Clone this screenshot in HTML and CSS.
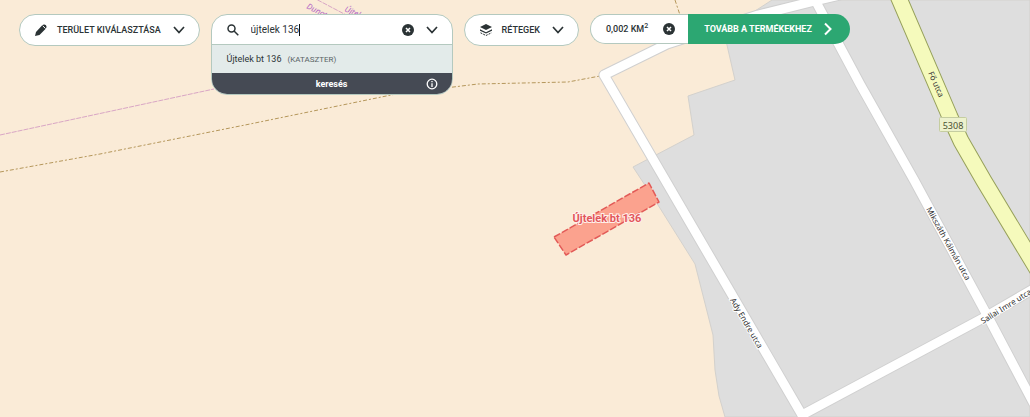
FILE: index.html
```
<!DOCTYPE html>
<html lang="hu">
<head>
<meta charset="utf-8">
<meta name="viewport" content="width=device-width, initial-scale=1">
<title>Térkép</title>
<link rel="stylesheet" href="styles.css">
</head>
<body>
<main class="map-page">
  <svg class="map" viewBox="0 0 1030 417" preserveAspectRatio="xMinYMin slice" role="img" aria-label="Térkép: Újtelek bt 136">
    <path class="built-area" d="M772 0L755 11L724 32L735 80L688 96L694 135L633 167L658 205L695 264L713 335L715 370L719 396L725 417H1030V0Z"/>
    <path class="border-pink" d="M0 135L214 89M312 -3L350 17"/>
    <path class="border-brown" d="M0 172L100 154L250 124L396 94L478 84L568 82L600 76M675 0L680 15"/>
    <g class="road-edge">
      <path d="M1040 285L987 316L802 415L604 75L667 44L758 15L815 1L840 -5"/>
      <path d="M815 0L860 84L914 180L987 315L1034 404"/>
    </g>
    <g class="road">
      <path d="M1040 285L987 316L802 415L604 75L667 44L758 15L815 1L840 -5"/>
      <path d="M815 0L860 84L914 180L987 315L1034 404"/>
    </g>
    <path class="main-road-edge" d="M898 -4L950 117L961 141L984 181L1040 274"/>
    <path class="main-road" d="M898 -4L950 117L961 141L984 181L1040 274"/>
    <path class="parcel" d="M554 237L649 183L659 202L566 255Z"/>
    <g class="street">
      <text transform="translate(730 300) rotate(60)">Ady Endre utca</text>
      <text transform="translate(926 209) rotate(61)">Mikszáth Kálmán utca</text>
      <text transform="translate(983 324) rotate(-32)">Sallai Imre utca</text>
      <text class="on-yellow" transform="translate(928 73) rotate(66)">Fő utca</text>
    </g>
    <g class="place">
      <text transform="translate(306 8) rotate(27)">Dunatetétlen</text>
      <text transform="translate(344 11) rotate(24)">Újtelek</text>
    </g>
    <rect class="road-sign" x="939.500" y="117.500" width="27" height="14" rx="1"/>
    <text class="road-number" x="953" y="129">5308</text>
    <text class="parcel-name" x="607" y="222">Újtelek bt 136</text>
  </svg>

  <header class="toolbar">
    <button class="pill area-button" type="button">
      <svg class="icon" viewBox="0 0 14 14" aria-hidden="true"><path d="M1 13L2 9L8 2.500Q10 .8 12 2.300Q13.400 4 11.700 5.700L5.500 12Z"/><path class="icon-gap" d="M8.700 2.800L11.500 5.500"/></svg>
      <span>TERÜLET KIVÁLASZTÁSA</span>
      <svg class="chevron" viewBox="0 0 12 8" aria-hidden="true"><path d="M1 1L6 6.500L11 1"/></svg>
    </button>

    <form class="search" role="search">
      <div class="search-row">
        <svg class="search-icon" viewBox="0 0 12 12" aria-hidden="true"><circle cx="4.500" cy="4.500" r="3.500"/><path d="M7 7L11.300 11.300"/></svg>
        <label class="field"><input class="search-input" type="text" aria-label="Keresés" value="újtelek 136"><span class="caret"></span></label>
        <button class="icon-button" type="button" aria-label="Törlés"><svg class="clear" viewBox="0 0 12 12" aria-hidden="true"><circle cx="6" cy="6" r="6"/><path d="M4 4L8 8M8 4L4 8"/></svg></button>
        <button class="icon-button" type="button" aria-label="Lenyitás"><svg class="chevron" viewBox="0 0 12 8" aria-hidden="true"><path d="M1 1L6 6.500L11 1"/></svg></button>
      </div>
      <button class="result" type="button"><span>Újtelek bt 136</span><span class="result-kind">(KATASZTER)</span></button>
      <div class="search-footer">
        <button class="submit" type="submit">keresés</button>
        <button class="icon-button info" type="button" aria-label="Információ"><svg class="info-icon" viewBox="0 0 12 12" aria-hidden="true"><circle cx="6" cy="6" r="4.800"/><path d="M6 5.300V9M6 3V4.300"/></svg></button>
      </div>
    </form>

    <button class="pill layers-button" type="button">
      <svg class="icon" viewBox="0 0 14 14" aria-hidden="true"><path d="M7 1L13 4L7 7L1 4ZM1 6.200L7 9.200L13 6.200V7.800L7 10.600L1 7.800Z"/><path class="layer-line" d="M1.500 9.800L7 12.500L12.500 9.800"/></svg>
      <span>RÉTEGEK</span>
      <svg class="chevron" viewBox="0 0 12 8" aria-hidden="true"><path d="M1 1L6 6.500L11 1"/></svg>
    </button>

    <div class="order">
      <div class="size">
        <span>0,002 KM<sup>2</sup></span>
        <button class="icon-button" type="button" aria-label="Terület törlése"><svg class="clear" viewBox="0 0 12 12" aria-hidden="true"><circle cx="6" cy="6" r="6"/><path d="M4 4L8 8M8 4L4 8"/></svg></button>
      </div>
      <button class="next" type="button"><span>TOVÁBB A TERMÉKEKHEZ</span><svg class="arrow" viewBox="0 0 8 14" aria-hidden="true"><path d="M1 1.500L6.500 7L1 12.500"/></svg></button>
    </div>
  </header>
</main>
</body>
</html>
```
FILE: styles.css
```
* { box-sizing: border-box; }

body {
  margin: 0;
  font-family: Roboto, "Liberation Sans", sans-serif;
  font-size: 9px;
  color: #2b3335;
  background: #faebd7;
}

button, input { font: inherit; color: inherit; }

button {
  padding: 0;
  border: 0;
  background: none;
  cursor: pointer;
}

.map-page {
  position: relative;
  min-height: 100vh;
  overflow: hidden;
}

/* Map */
.map {
  position: absolute;
  inset: 0;
  width: 100%;
  height: 100%;
}

.map path { stroke-linejoin: round; }
.built-area { fill: #dedede; stroke: #d3d1cd; }
.border-pink { fill: none; stroke: #d9a6c5; stroke-dasharray: 5 1; }
.border-brown { fill: none; stroke: #b5975b; stroke-dasharray: 4 2 2 2; }
.road-edge { fill: none; stroke: #d0d0d0; stroke-width: 11; }
.road { fill: none; stroke: #fff; stroke-width: 9; }
.main-road-edge { fill: none; stroke: #96a05a; stroke-width: 17; }
.main-road { fill: none; stroke: #f5fabc; stroke-width: 15; }
.parcel { fill: #fba28e; stroke: #e25a57; stroke-width: 1.500; stroke-dasharray: 7 2; }

.street text {
  font: 8px "Noto Sans", sans-serif;
  fill: #333;
  stroke: #fff;
  stroke-width: 2px;
  paint-order: stroke;
}
.street .on-yellow { stroke: #f5fabc; }
.place { font: italic 8px "Noto Sans", sans-serif; fill: #b264c4; }
.road-sign { fill: #edf2cd; stroke: #c5cda0; }
.road-number { font: 9px "Noto Sans", sans-serif; fill: #4b5132; text-anchor: middle; }
.parcel-name {
  font: bold 11px Roboto, sans-serif;
  fill: #e2565b;
  stroke: #fff0ea;
  stroke-width: 2px;
  paint-order: stroke;
  text-anchor: middle;
}

/* Toolbar */
.toolbar {
  position: relative;
  display: flex;
  align-items: flex-start;
  gap: 11px;
  padding: 14px 19px;
}

.pill {
  display: flex;
  align-items: center;
  height: 32px;
  padding: 0 14px;
  border: 1px solid #b4c9bf;
  border-radius: 16px;
  background: #fff;
  font-weight: 500;
  white-space: nowrap;
}
.pill .chevron { margin-left: 12px; }
.area-button .icon { margin-right: 9px; }
.layers-button .icon { margin-right: 9px; }

.icon { width: 14px; height: 14px; fill: #2b3335; }
.icon-gap { stroke: #fff; }
.layer-line { fill: none; stroke: #2b3335; stroke-dasharray: 2 1; }
.chevron { width: 12px; height: 8px; fill: none; stroke: #2b3335; stroke-width: 1.700; }
.clear { width: 12px; height: 12px; fill: #2b3335; stroke-width: 1.500; }
.clear path { stroke: #fff; }
.icon-button { display: flex; }

.search {
  width: 242px;
  overflow: hidden;
  border: 1px solid #b4c9bf;
  border-radius: 16px;
  background: #fff;
}
.search-row {
  display: flex;
  align-items: center;
  gap: 12px;
  height: 30px;
  padding: 0 14px 0 15px;
  border-bottom: 1px solid #b4c9bf;
}
.search-icon { width: 12px; height: 12px; fill: none; stroke: #2b3335; stroke-width: 1.500; }
.field { display: flex; flex: 1; align-items: center; }
.search-input {
  field-sizing: content;
  padding: 0;
  border: 0;
  outline: 0;
  background: none;
  font-size: 10px;
}
.caret { width: 1px; height: 12px; background: #111; }

.result {
  display: flex;
  align-items: center;
  gap: 6px;
  width: 100%;
  height: 28px;
  padding: 0 15px;
  background: #e3ebea;
}
.result-kind { font-size: 8px; color: #5a6466; }

.search-footer {
  display: grid;
  grid-template-columns: 1fr auto;
  align-items: center;
  height: 21px;
  padding: 0 14px;
  background: #454a54;
  color: #fff;
}
.submit { padding-left: 12px; font-weight: 700; }
.info-icon { width: 12px; height: 12px; fill: none; stroke: #fff; stroke-width: 1.300; }

.order { display: flex; height: 30px; white-space: nowrap; }
.size {
  display: flex;
  align-items: center;
  gap: 15px;
  padding: 0 13px 0 15px;
  border: 1px solid #b4c9bf;
  border-right: 0;
  border-radius: 15px 0 0 15px;
  background: #fff;
  font-weight: 500;
}
.size sup { font-size: 7px; line-height: 0; }
.next {
  display: flex;
  align-items: center;
  gap: 12px;
  padding: 0 18px 0 16px;
  border-radius: 0 15px 15px 0;
  background: #2ca772;
  color: #fff;
  font-weight: 700;
}
.arrow { width: 8px; height: 14px; fill: none; stroke: #fff; stroke-width: 2; }
```
